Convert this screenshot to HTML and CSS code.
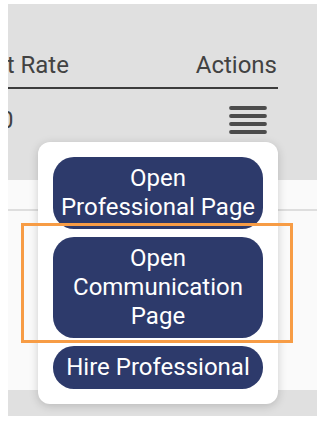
FILE: index.html
```html
<!DOCTYPE html>
<html>
<head>
<meta charset="utf-8">
<link rel="stylesheet" href="styles.css">
</head>
<body>
<div class="frame">
  <div class="head">
    <div class="head-cells">
      <span class="col-rate">Cost Rate</span>
      <span class="col-actions">Actions</span>
    </div>
  </div>
  <div class="row">
    <span class="cell-val">0</span>
    <span class="menu-btn">
      <svg width="38" height="30" viewBox="0 0 38 30">
        <g stroke="#4c4c4c" stroke-width="3.8" stroke-linecap="round">
          <line x1="2" y1="3" x2="36" y2="3"/>
          <line x1="2" y1="11" x2="36" y2="11"/>
          <line x1="2" y1="19" x2="36" y2="19"/>
          <line x1="2" y1="27" x2="36" y2="27"/>
        </g>
      </svg>
    </span>
  </div>
  <div class="spacer"></div>
  <div class="body">
    <div class="divider"></div>
  </div>
  <div class="foot"></div>

  <div class="menu">
    <button class="action">Open<br>Professional Page</button>
    <button class="action">Open<br>Communication<br>Page</button>
    <button class="action">Hire Professional</button>
  </div>
  <div class="highlight"></div>
</div>
</body>
</html>
```

FILE: styles.css
```css
html, body {
  margin: 0;
  padding: 0;
  background: #ffffff;
}

.frame {
  position: relative;
  margin: 4px 0 0 8px;
  width: 309px;
  height: 412px;
  background: #e0e0e0;
  overflow: hidden;
  display: flex;
  flex-direction: column;
  font-family: Roboto, "Liberation Sans", sans-serif;
  color: #424242;
}

.head {
  width: 270px;
  padding-top: 47px;
  border-bottom: 2px solid #3c3c3c;
  padding-bottom: 8px;
  overflow: hidden;
}

.head-cells {
  display: flex;
  justify-content: space-between;
  font-size: 24px;
  line-height: 28px;
}

.col-rate {
  margin-left: -43px;
}

.col-actions {
  margin-right: 1px;
}

.row {
  height: 62px;
  display: flex;
  align-items: center;
  justify-content: space-between;
  width: 259px;
}

.cell-val {
  font-size: 24px;
  line-height: 28px;
  margin-left: -8px;
}

.menu-btn {
  display: flex;
}

.spacer {
  height: 29px;
}

.body {
  height: 210px;
  background: #fafafa;
  padding-top: 29px;
  box-sizing: border-box;
}

.divider {
  height: 2px;
  background: #dedede;
}

.foot {
  flex: 1;
  background: #e0e0e0;
}

.menu {
  position: absolute;
  left: 30px;
  top: 138px;
  width: 240px;
  box-sizing: border-box;
  padding: 15px;
  background: #ffffff;
  border-radius: 12px;
  box-shadow: 0 2px 10px rgba(0, 0, 0, 0.18);
  display: flex;
  flex-direction: column;
  gap: 8px;
}

.action {
  border: none;
  background: #2d3a6b;
  color: #ffffff;
  font-family: Roboto, "Liberation Sans", sans-serif;
  font-size: 24px;
  line-height: 29px;
  padding: 7px 4px;
  border-radius: 21px;
  text-align: center;
  width: 100%;
}

.highlight {
  position: absolute;
  left: 13px;
  top: 219px;
  width: 272px;
  height: 120px;
  box-sizing: border-box;
  border: 3px solid #f79c45;
}
```
